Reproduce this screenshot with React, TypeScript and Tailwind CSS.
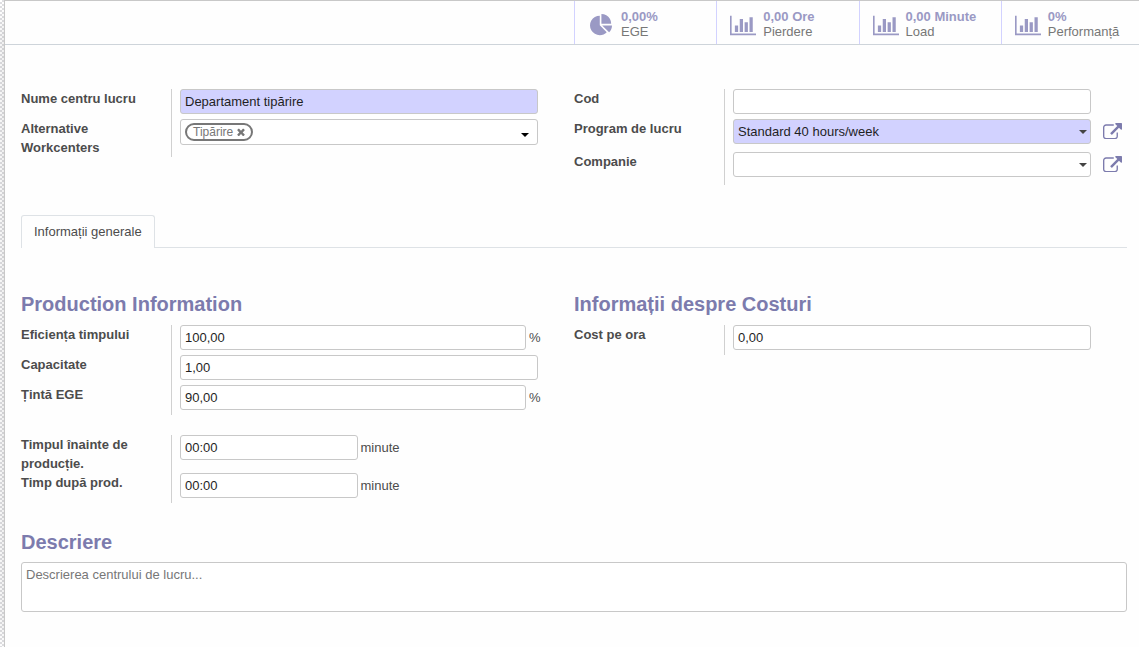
import { useState, type ReactNode } from "react";

/**
 * Work center form: stat buttons on top, identification fields,
 * then the general information tab and the description.
 */

const PIE =
  "M768 890l546 546q-106 108-247.5 168t-298.5 60q-209 0-385.5-103t-279.5-279.5-103-385.5 103-385.5 279.5-279.5 385.5-103v762zM955 896h773q0 157-60 298.5t-168 247.5zM1664 768h-768v-768q209 0 385.5 103t279.5 279.5 103 385.5z";
const BARS =
  "M640 896v512h-256v-512h256zM1024 384v1024h-256v-1024h256zM2048 1536v128h-2048v-1536h128v1408h1920zM1408 640v768h-256v-768h256zM1792 256v1152h-256v-1152h256z";
const EXTERNAL =
  "M1408 928v320q0 119-84.5 203.5t-203.5 84.5h-832q-119 0-203.5-84.5t-84.5-203.5v-832q0-119 84.5-203.5t203.5-84.5h704q14 0 23 9t9 23v64q0 14-9 23t-23 9h-704q-66 0-113 47t-47 113v832q0 66 47 113t113 47h832q66 0 113-47t47-113v-320q0-14 9-23t23-9h64q14 0 23 9t9 23zm384-864v512q0 26-19 45t-45 19-45-19l-176-176-652 652q-10 10-23 10t-23-10l-114-114q-10-10-10-23t10-23l652-652-176-176q-19-19-19-45t19-45 45-19h512q26 0 45 19t19 45z";
const TIMES =
  "M1490 1322q0 40-28 68l-136 136q-28 28-68 28t-68-28l-294-294-294 294q-28 28-68 28t-68-28l-136-136q-28-28-28-68t28-68l294-294-294-294q-28-28-28-68t28-68l136-136q28-28 68-28t68 28l294 294 294-294q28-28 68-28t68 28l136 136q28 28 28 68t-28 68l-294 294 294 294q28 28 28 68z";

const stats = [
  { value: "0,00%", label: "EGE", icon: PIE, box: "0 0 1728 1664", size: "w-[22px]" },
  { value: "0,00 Ore", label: "Pierdere", icon: BARS, box: "0 0 2048 1792", size: "w-[26px]" },
  { value: "0,00 Minute", label: "Load", icon: BARS, box: "0 0 2048 1792", size: "w-[26px]" },
  { value: "0%", label: "Performanță", icon: BARS, box: "0 0 2048 1792", size: "w-[26px]" },
];

const inputClass =
  "block h-[25px] w-full min-w-0 rounded-[3px] border border-[#c8c8c8] px-1 text-[13px] text-[#1f1f1f] outline-none";

function Field({
  id,
  label,
  rowClass = "min-h-[30px]",
  aside,
  children,
}: {
  id: string;
  label: string;
  rowClass?: string;
  aside?: ReactNode;
  children: ReactNode;
}) {
  return (
    <div className={`flex ${rowClass}`}>
      <div className="w-[151px] shrink-0 border-r border-[#d0d0d0] pr-4">
        <label htmlFor={id} className="block font-bold">
          {label}
        </label>
      </div>
      <div className="min-w-0 flex-1 pl-2">{children}</div>
      <div className="w-9 shrink-0 pl-3">{aside}</div>
    </div>
  );
}

function TextField({ id, initial, className = "bg-white" }: { id: string; initial: string; className?: string }) {
  const [value, setValue] = useState(initial);
  return <input id={id} type="text" value={value} onChange={(e) => setValue(e.target.value)} className={`${inputClass} ${className}`} />;
}

function Caret() {
  return (
    <svg viewBox="0 0 8 4" className="pointer-events-none absolute right-1 top-[11px] w-2 text-[#444]" aria-hidden="true">
      <path d="M0 0h8L4 4z" fill="currentColor" />
    </svg>
  );
}

function SelectField({ id, options, className }: { id: string; options: string[]; className: string }) {
  return (
    <div className="relative">
      <select id={id} className={`${inputClass} appearance-none ${className}`}>
        {options.map((o) => (
          <option key={o}>{o}</option>
        ))}
      </select>
      <Caret />
    </div>
  );
}

function OpenButton({ label }: { label: string }) {
  return (
    <button type="button" aria-label={label} className="mt-1 block text-[#7c7bad]">
      <svg viewBox="0 0 1792 1536" className="w-[19px]" aria-hidden="true">
        <path d={EXTERNAL} fill="currentColor" />
      </svg>
    </button>
  );
}

export default function App() {
  const [tags, setTags] = useState(["Tipărire"]);

  return (
    <div className="min-h-screen overflow-hidden bg-white bg-[conic-gradient(#dfdfe2_25%,#fff_0_50%,#dfdfe2_0_75%,#fff_0)] bg-[size:4px_4px] pl-1 font-['Liberation_Sans',Arial,sans-serif] text-[13px] leading-[19px] text-[#4c4c4c]">
      <main className="min-h-screen border-l border-t border-[#c8c8c8] bg-[#fefefe] shadow-[0_5px_20px_-15px_black]">
        <div className="flex h-11 justify-end overflow-hidden border-b border-[#ced4da]">
          <div className="-mr-1 grid w-[569px] shrink-0 grid-cols-4">
            {stats.map((s) => (
              <button key={s.label} type="button" className="flex items-center border-l border-[#d2d2ff] pt-[3px] pl-[13px] text-left">
                <span className="mr-[7px] flex w-[26px] shrink-0 justify-center pt-[2px]">
                  <svg viewBox={s.box} className={`${s.size} text-[#9a99c4]`} aria-hidden="true">
                    <path d={s.icon} fill="currentColor" />
                  </svg>
                </span>
                <span className="leading-[15px] whitespace-nowrap">
                  <span className="block font-bold text-[#9a99c4]">{s.value}</span>
                  <span className="block text-[#777]">{s.label}</span>
                </span>
              </button>
            ))}
          </div>
        </div>

        <form className="px-4 pr-3" onSubmit={(e) => e.preventDefault()}>
          <div className="grid grid-cols-2 items-start pt-11">
            <div>
              <Field id="name" label="Nume centru lucru">
                <TextField id="name" initial="Departament tipărire" className="bg-[#d2d2ff]" />
              </Field>
              <Field id="alternatives" label="Alternative Workcenters">
                <div className="flex h-[26px] items-center rounded-[3px] border border-[#c8c8c8] bg-white px-1">
                  {tags.map((t) => (
                    <span key={t} className="flex h-[18px] items-center gap-1 rounded-full border-2 border-[#777] px-[6px] text-xs text-[#777]">
                      {t}
                      <button type="button" aria-label={`Șterge ${t}`} onClick={() => setTags(tags.filter((x) => x !== t))}>
                        <svg viewBox="256 256 1280 1344" className="w-2" aria-hidden="true">
                          <path d={TIMES} fill="currentColor" />
                        </svg>
                      </button>
                    </span>
                  ))}
                  <input id="alternatives" type="text" className="min-w-0 flex-1 bg-transparent px-1 outline-none" />
                  <svg viewBox="0 0 8 4" className="mt-[6px] mr-1 w-2 text-black" aria-hidden="true">
                    <path d="M0 0h8L4 4z" fill="currentColor" />
                  </svg>
                </div>
              </Field>
            </div>
            <div>
              <Field id="code" label="Cod">
                <TextField id="code" initial="" />
              </Field>
              <Field id="schedule" label="Program de lucru" rowClass="min-h-[33px]" aside={<OpenButton label="Deschide programul" />}>
                <SelectField id="schedule" options={["Standard 40 hours/week"]} className="bg-[#d2d2ff]" />
              </Field>
              <Field id="company" label="Companie" rowClass="min-h-[33px]" aside={<OpenButton label="Deschide compania" />}>
                <SelectField id="company" options={[""]} className="bg-white" />
              </Field>
            </div>
          </div>

          <div role="tablist" className="mt-[30px] flex border-b border-[#dee2e6]">
            <button
              type="button"
              role="tab"
              aria-selected="true"
              className="-mb-px h-[33px] rounded-t-[3px] border border-b-0 border-[#dee2e6] bg-[#fefefe] px-3 pb-[2px]"
            >
              Informații generale
            </button>
          </div>

          <div className="grid grid-cols-2 items-start pt-11">
            <div>
              <h2 className="pb-[9px] text-xl leading-6 font-bold text-[#7c7bad]">Production Information</h2>
              <Field id="efficiency" label="Eficiența timpului">
                <div className="flex items-center">
                  <TextField id="efficiency" initial="100,00" />
                  <span className="w-3 shrink-0 pl-[3px]">%</span>
                </div>
              </Field>
              <Field id="capacity" label="Capacitate">
                <TextField id="capacity" initial="1,00" />
              </Field>
              <Field id="target" label="Țintă EGE">
                <div className="flex items-center">
                  <TextField id="target" initial="90,00" />
                  <span className="w-3 shrink-0 pl-[3px]">%</span>
                </div>
              </Field>
              <div className="mt-5">
                <Field id="before" label="Timpul înainte de producție.">
                  <div className="grid grid-cols-2 items-center gap-[3px]">
                    <TextField id="before" initial="00:00" />
                    <span>minute</span>
                  </div>
                </Field>
                <Field id="after" label="Timp după prod.">
                  <div className="grid grid-cols-2 items-center gap-[3px]">
                    <TextField id="after" initial="00:00" />
                    <span>minute</span>
                  </div>
                </Field>
              </div>
            </div>
            <div>
              <h2 className="pb-[9px] text-xl leading-6 font-bold text-[#7c7bad]">Informații despre Costuri</h2>
              <Field id="cost" label="Cost pe ora">
                <TextField id="cost" initial="0,00" />
              </Field>
            </div>
          </div>

          <h2 className="pt-[27px] pb-2 text-xl leading-6 font-bold text-[#7c7bad]">
            <label htmlFor="description">Descriere</label>
          </h2>
          <textarea
            id="description"
            placeholder="Descrierea centrului de lucru..."
            className="block h-[50px] w-full resize-none rounded-[3px] border border-[#c8c8c8] bg-white px-1 py-[2px] outline-none placeholder:text-[#777]"
          />
        </form>
      </main>
    </div>
  );
}
